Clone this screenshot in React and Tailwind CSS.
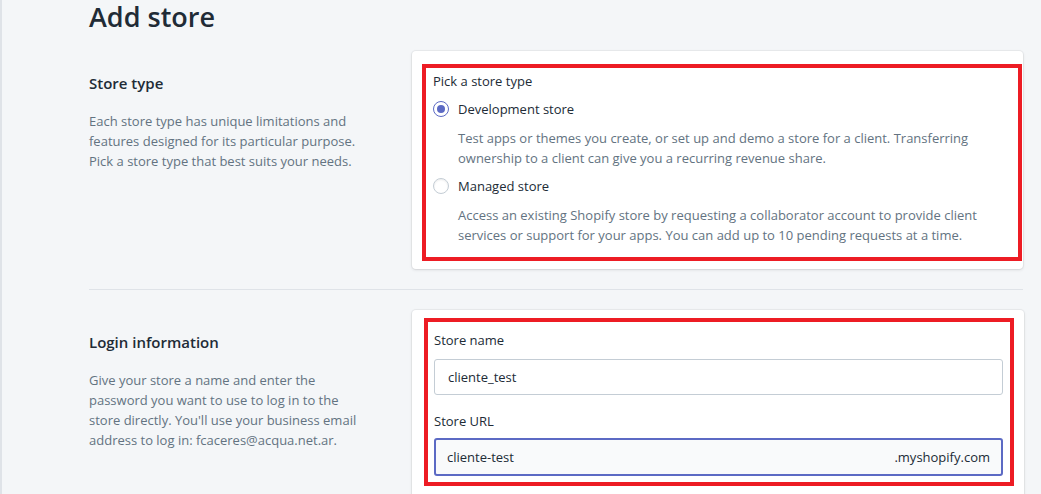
import React from "react";

const font = { fontFamily: '"Open Sans", "Noto Sans", "Liberation Sans", sans-serif' };

function Radio({ checked }) {
  return (
    <span
      className={
        "flex h-4 w-4 shrink-0 items-center justify-center rounded-full border bg-white " +
        (checked ? "border-[#5c6ac4]" : "border-[#c4cdd5] shadow-[inset_0_1px_2px_rgba(0,0,0,0.08)]")
      }
    >
      {checked && <span className="h-2 w-2 rounded-full bg-[#5c6ac4]" />}
    </span>
  );
}

export default function App() {
  return (
    <div
      className="h-[494px] w-[1041px] overflow-hidden border-l-2 border-[#dfe3e8] bg-[#f4f6f8] text-[#212b36]"
      style={font}
    >
      <div className="pl-[87px] pr-[18px]">
        <h1 className="h-[51px] text-[27px] leading-[34px] font-semibold text-[#212b36]">Add store</h1>

        <div className="flex">
          <div className="w-[323px] shrink-0 pt-[21px]">
            <h2 className="text-[15px] leading-[22px] font-semibold">Store type</h2>
            <p className="mt-[17px] text-[13px] leading-[20px] text-[#637381]">
              Each store type has unique limitations and
              <br />
              features designed for its particular purpose.
              <br />
              Pick a store type that best suits your needs.
            </p>
          </div>
          <div className="flex-1 rounded-[4px] bg-white pl-[10px] pr-[1px] pt-[13px] pb-[8px] shadow-[0_0_0_1px_rgba(63,63,68,0.05),0_1px_3px_0_rgba(63,63,68,0.15)]">
            <div className="border-[4px] border-[#ed1c24] pl-[7px] pt-[3px] pb-[12px] text-[13px] leading-[20px]">
              <div className="text-[#212b36]">Pick a store type</div>
              <div className="mt-[8px] flex items-center gap-[9px]">
                <Radio checked />
                <span>Development store</span>
              </div>
              <p className="mt-[9px] pl-[25px] text-[#637381]">
                Test apps or themes you create, or set up and demo a store for a client. Transferring
                <br />
                ownership to a client can give you a recurring revenue share.
              </p>
              <div className="mt-[8px] flex items-center gap-[9px]">
                <Radio />
                <span>Managed store</span>
              </div>
              <p className="mt-[9px] pl-[25px] text-[#637381]">
                Access an existing Shopify store by requesting a collaborator account to provide client
                <br />
                services or support for your apps. You can add up to 10 pending requests at a time.
              </p>
            </div>
          </div>
        </div>

        <div className="mt-[20px] h-px bg-[#dfe3e8]" />

        <div className="mt-[20px] flex">
          <div className="w-[323px] shrink-0 pt-[21px]">
            <h2 className="text-[15px] leading-[22px] font-semibold">Login information</h2>
            <p className="mt-[17px] text-[13px] leading-[20px] text-[#637381]">
              Give your store a name and enter the
              <br />
              password you want to use to log in to the
              <br />
              store directly. You'll use your business email
              <br />
              address to log in: fcaceres@acqua.net.ar.
            </p>
          </div>
          <div className="h-[200px] flex-1 rounded-[4px] bg-white pl-[12px] pr-[10px] pt-[8px] shadow-[0_0_0_1px_rgba(63,63,68,0.05),0_1px_3px_0_rgba(63,63,68,0.15)]">
            <div className="w-[590px] border-[4px] border-[#ed1c24] pl-[6px] pr-[7px] pt-[8px] pb-[6px] text-[13px] leading-[20px]">
              <div>Store name</div>
              <div className="mt-[9px] flex h-[36px] items-center rounded-[3px] border border-[#c4cdd5] bg-white px-[13px]">
                cliente_test
              </div>
              <div className="mt-[16px]">Store URL</div>
              <div className="mt-[7px] flex h-[38px] items-center justify-between rounded-[3px] border-2 border-[#5c6ac4] bg-[#f9fafb] px-[11px]">
                <span>cliente-test</span>
                <span>.myshopify.com</span>
              </div>
            </div>
          </div>
        </div>
      </div>
    </div>
  );
}
